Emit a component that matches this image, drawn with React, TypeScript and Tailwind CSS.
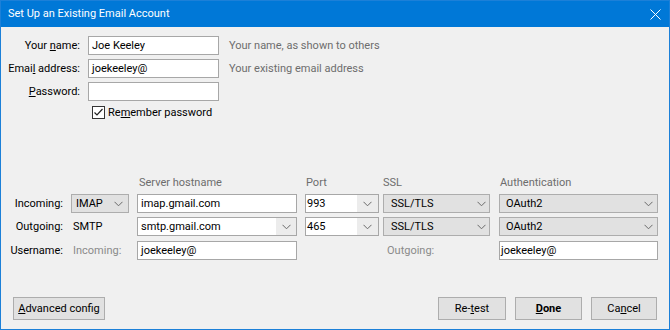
import React from "react";

const Chevron = () => (
  <svg width="9" height="6" viewBox="0 0 9 6" className="shrink-0">
    <path d="M0.5 0.8 L4.5 4.8 L8.5 0.8" fill="none" stroke="#6a6a6a" strokeWidth="1" />
  </svg>
);

const Input = ({ value, w, pl = "pl-[3px]" }: { value: string; w: string; pl?: string }) => (
  <div className={`${w} h-[19px] bg-white border border-[#a7a7a7] flex items-center ${pl} text-black`}>
    {value}
  </div>
);

const Select = ({ value, w, pl, pr }: { value: string; w: string; pl: string; pr: string }) => (
  <div className={`${w} h-[19px] bg-[#e1e1e1] border border-[#adadad] flex items-center justify-between ${pl} ${pr} text-black`}>
    <span>{value}</span>
    <Chevron />
  </div>
);

const Combo = ({ value, w, btn, pl }: { value: string; w: string; btn: string; pl: string }) => (
  <div className={`${w} h-[19px] bg-white border border-[#a7a7a7] flex items-stretch text-black`}>
    <div className={`flex-1 flex items-center ${pl}`}>{value}</div>
    <div className={`${btn} bg-[#ececec] flex items-center justify-center`}>
      <Chevron />
    </div>
  </div>
);

const Btn = ({ children, w, bold = false }: { children: React.ReactNode; w: string; bold?: boolean }) => (
  <div
    className={`${w} h-[23px] bg-[#e1e1e1] border border-[#adadad] flex items-center justify-center text-black ${bold ? "font-bold" : ""}`}
  >
    {children}
  </div>
);

export default function App() {
  return (
    <div className="w-[670px] h-[330px] flex flex-col border border-[#1c80d8] bg-[#f0f0f0] font-['Roboto',sans-serif] text-[11px] leading-[16px] overflow-hidden">
      {/* Title bar */}
      <div className="h-[26px] shrink-0 bg-[#0078d7] flex items-center justify-between pl-[7px] pr-[8px] text-white text-[11px]">
        <span>Set Up an Existing Email Account</span>
        <svg width="11" height="11" viewBox="0 0 11 11">
          <path d="M0.5 0.5 L10.5 10.5 M10.5 0.5 L0.5 10.5" stroke="#ffffff" strokeWidth="1" fill="none" />
        </svg>
      </div>

      {/* Top form */}
      <div className="pt-[9px] flex flex-col gap-[4px]">
        <div className="flex items-center h-[19px]">
          <div className="w-[79px] text-right text-black">
            Your <span className="underline">n</span>ame:
          </div>
          <div className="ml-[8px]">
            <Input value="Joe Keeley" w="w-[131px]" />
          </div>
          <div className="ml-[10px] text-[#6d6d6d]">Your name, as shown to others</div>
        </div>
        <div className="flex items-center h-[19px]">
          <div className="w-[79px] text-right text-black">
            Emai<span className="underline">l</span> address:
          </div>
          <div className="ml-[8px]">
            <Input value="joekeeley@" w="w-[131px]" />
          </div>
          <div className="ml-[10px] text-[#6d6d6d]">Your existing email address</div>
        </div>
        <div className="flex items-center h-[19px]">
          <div className="w-[79px] text-right text-black">
            <span className="underline">P</span>assword:
          </div>
          <div className="ml-[8px]">
            <Input value="" w="w-[131px]" />
          </div>
        </div>
        <div className="flex items-center h-[13px] mt-[1px] pl-[91px]">
          <div className="w-[13px] h-[13px] bg-white border border-[#333333] flex items-center justify-center">
            <svg width="11" height="11" viewBox="0 0 11 11">
              <path d="M1.5 5.5 L4 8 L9.5 2" fill="none" stroke="#222222" strokeWidth="1.2" />
            </svg>
          </div>
          <span className="ml-[3px] text-black">
            Re<span className="underline">m</span>ember password
          </span>
        </div>
      </div>

      {/* Server section */}
      <div className="mt-[56px] flex flex-col">
        <div className="flex items-center h-[16px] text-[#6d6d6d]">
          <div className="w-[62px] mr-[8px]" />
          <div className="w-[58px] mr-[8px]" />
          <div className="w-[160px] mr-[8px] pl-[2px]">Server hostname</div>
          <div className="w-[74px] mr-[4px] pl-[1px]">Port</div>
          <div className="w-[107px] mr-[9px]">SSL</div>
          <div className="w-[159px] pl-[1px]">Authentication</div>
        </div>

        <div className="flex items-center h-[19px] mt-[3px]">
          <div className="w-[62px] mr-[8px] text-right text-black">Incoming:</div>
          <div className="mr-[8px]">
            <Select value="IMAP" w="w-[58px]" pl="pl-[4px]" pr="pr-[5px]" />
          </div>
          <div className="mr-[8px]">
            <Input value="imap.gmail.com" w="w-[160px]" />
          </div>
          <div className="mr-[4px]">
            <Combo value="993" w="w-[74px]" btn="w-[21px]" pl="pl-[1px]" />
          </div>
          <div className="mr-[9px]">
            <Select value="SSL/TLS" w="w-[107px]" pl="pl-[7px]" pr="pr-[3px]" />
          </div>
          <Select value="OAuth2" w="w-[159px]" pl="pl-[6px]" pr="pr-[4px]" />
        </div>

        <div className="flex items-center h-[19px] mt-[4px]">
          <div className="w-[62px] mr-[8px] text-right text-black">Outgoing:</div>
          <div className="w-[58px] mr-[8px] pl-[2px] text-black">SMTP</div>
          <div className="mr-[8px]">
            <Combo value="smtp.gmail.com" w="w-[160px]" btn="w-[20px]" pl="pl-[3px]" />
          </div>
          <div className="mr-[4px]">
            <Combo value="465" w="w-[74px]" btn="w-[21px]" pl="pl-[1px]" />
          </div>
          <div className="mr-[9px]">
            <Select value="SSL/TLS" w="w-[107px]" pl="pl-[7px]" pr="pr-[3px]" />
          </div>
          <Select value="OAuth2" w="w-[159px]" pl="pl-[6px]" pr="pr-[4px]" />
        </div>

        <div className="flex items-center h-[19px] mt-[5px]">
          <div className="w-[62px] mr-[8px] text-right text-black">Username:</div>
          <div className="w-[58px] mr-[8px] pl-[2px] text-[#8a8a8a]">Incoming:</div>
          <div className="mr-[8px]">
            <Input value="joekeeley@" w="w-[160px]" />
          </div>
          <div className="w-[74px] mr-[4px]" />
          <div className="w-[107px] mr-[9px] pl-[4px] text-[#8a8a8a]">Outgoing:</div>
          <Input value="joekeeley@" w="w-[159px]" pl="pl-[1px]" />
        </div>
      </div>

      {/* Buttons */}
      <div className="mt-[37px] flex items-center px-[12px]">
        <Btn w="w-[92px]">
          <span>
            <span className="underline">A</span>dvanced config
          </span>
        </Btn>
        <div className="flex-1" />
        <Btn w="w-[68px]">
          <span>
            Re-<span className="underline">t</span>est
          </span>
        </Btn>
        <div className="w-[9px]" />
        <Btn w="w-[67px]" bold>
          <span>
            <span className="underline">D</span>one
          </span>
        </Btn>
        <div className="w-[9px]" />
        <Btn w="w-[66px]">
          <span>
            Ca<span className="underline">n</span>cel
          </span>
        </Btn>
      </div>
    </div>
  );
}
